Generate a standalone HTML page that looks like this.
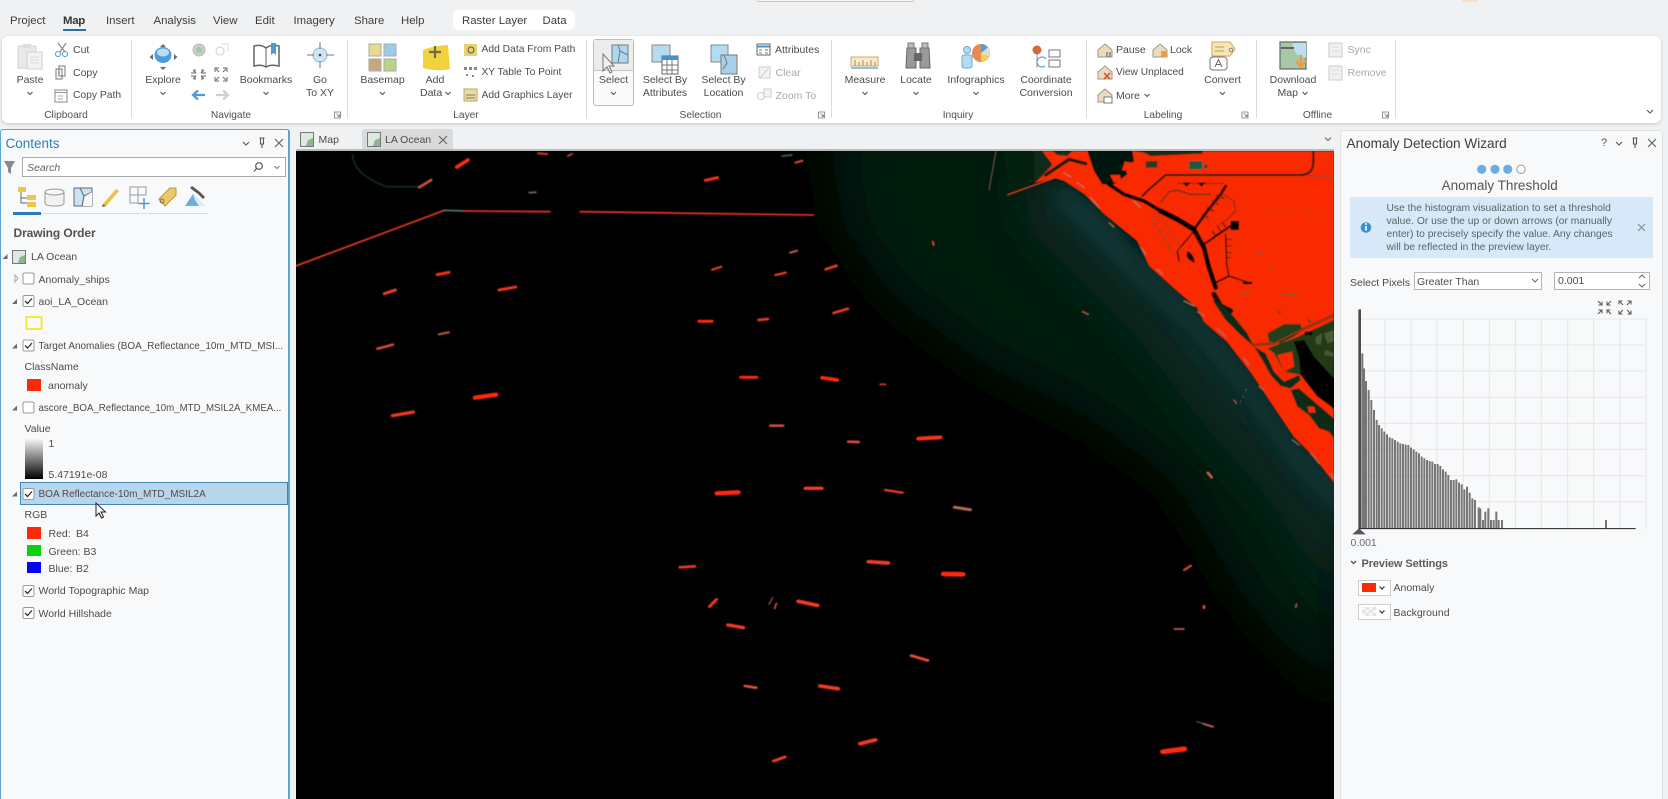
<!DOCTYPE html>
<html><head><meta charset="utf-8"><title>ArcGIS Pro</title>
<style>
html,body{margin:0;padding:0;width:1668px;height:799px;overflow:hidden;background:#eff1f3}
#r{position:absolute;left:0;top:0;width:1668px;height:799px;overflow:hidden;filter:blur(.35px);font-family:"Liberation Sans",sans-serif;color:#444;font-size:10.5px}
.b{position:absolute;box-sizing:border-box}
.t{position:absolute;white-space:nowrap;line-height:14px;height:14px}
.c{transform:translateX(-50%)}
.m{font-size:11.4px;color:#3d3d3d}
.d{color:#a9a9a9}
.g{color:#4c4c4c}
.l{font-size:10.2px;color:#505050}
svg{position:absolute}
</style></head><body><div id="r">
<!-- title and ribbon -->
<div class="b" style="left:757px;top:-2px;width:157px;height:4px;background:#f7f7f7;border:1px solid #c9c9c9;border-radius:2px"></div>
<div class="b" style="left:1462px;top:-3px;width:16px;height:5px;background:#fbdcc0;border-radius:8px"></div>
<div class="b" style="left:453px;top:10px;width:122px;height:20px;background:#fff;border-radius:5px"></div>
<div class="b" style="left:63px;top:29px;width:23px;height:2px;background:#2b6fa8"></div>
<div class="b" style="left:2px;top:36px;width:1659px;height:87px;background:#fff;border-radius:6px;box-shadow:0 1px 3px rgba(0,0,0,.18)"></div>
<div class="b" style="left:593px;top:39px;width:41px;height:67px;background:#fafafa;border:1px solid #b9bdc1;border-radius:3px"></div>
<div class="b" style="left:594px;top:40px;width:39px;height:31px;background:#ececec;border-bottom:1px solid #c4c4c4"></div>
<!-- left pane -->
<div class="b" style="left:0;top:129px;width:290px;height:680px;background:#f8f9fa;border:1px solid #5aa7d6;border-right-width:2px;border-radius:3px 3px 0 0"></div>
<div class="b" style="left:22px;top:157px;width:264px;height:20px;background:#fff;border:1px solid #a9a9a9"></div>
<div class="b" style="left:13px;top:213px;width:195px;height:1px;background:#dcdcdc"></div>
<div class="b" style="left:13px;top:212px;width:28px;height:3px;background:#2a7ac0"></div>
<div class="b" style="left:20px;top:482px;width:268px;height:23px;background:#b9d5ec;border:1px solid #3f87b5"></div>
<!-- tab strip -->
<div class="b" style="left:362px;top:129px;width:91px;height:20px;background:#d8dadc;border-radius:3px 3px 0 0"></div>
<div class="b" style="left:296px;top:149px;width:1038px;height:2px;background:#b9bbbd"></div>
<!-- map -->
<svg style="left:296px;top:151px" width="1038" height="648" viewBox="296 151 1038 648">
<defs>
<filter id="f1" filterUnits="userSpaceOnUse" x="0" y="0" width="1800" height="1000"><feGaussianBlur stdDeviation="28"/></filter>
<filter id="f2" filterUnits="userSpaceOnUse" x="0" y="0" width="1800" height="1000"><feGaussianBlur stdDeviation="22"/></filter>
<filter id="f5" filterUnits="userSpaceOnUse" x="0" y="0" width="1800" height="1000"><feGaussianBlur stdDeviation="9"/></filter>
<filter id="f3" filterUnits="userSpaceOnUse" x="0" y="0" width="1800" height="1000"><feGaussianBlur stdDeviation=".5"/></filter>
</defs>
<rect x="296" y="151" width="1038" height="648" fill="#000"/>
<path filter="url(#f1)" d="M825 120H1070L1345 480V710L1245 600L1175 480L1085 415L985 365L890 295L845 230Z" fill="#021a10"/>
<path filter="url(#f2)" d="M1020 175L1054 178L1104 214L1149 266L1197 308L1251 373L1294 437L1345 483V620L1270 500L1200 420L1135 335L1070 270L1030 230Z" fill="#072624"/>
<path filter="url(#f5)" d="M1064 181L1104 214L1149 266L1197 308L1251 373L1294 437L1340 483V520L1290 465L1240 395L1185 330L1130 280L1085 235L1050 200Z" fill="#0c3536"/>
<path d="M1003 151H1041L1054 175L1010 196Z" fill="#04200f"/>
<g filter="url(#f3)">
<path fill="#fa2c06" d="M1041 151H1334V483L1314 457L1294 437L1271 403L1251 373L1227 342L1204 322L1197 308L1177 291L1149 266L1137 241L1104 214L1084 194L1064 181L1054 178L1034 183L1042 176L1052 165Z"/>
<path d="M1007 195L1057 177" stroke="#f0391a" stroke-width="1.400" fill="none"/>
<path d="M996 151L989 190" stroke="#a46058" stroke-width=".8" fill="none"/>
<!-- upper area: crop A coords -->
<g transform="translate(1034 151) scale(.33333)" fill="none" stroke-linecap="round" stroke-linejoin="round">
<path fill="#0a2a1e" d="M0 0H25L55 40L25 72L0 90Z"/>
<path d="M35 72L105 25L155 38" stroke="#0a1a0c" stroke-width="10"/>
<path fill="#10301c" d="M55 0H115L100 15L70 12Z"/>
<path fill="#06140a" d="M160 0H295L300 30L275 55L280 70L240 100L205 100L180 60Z"/>
<path fill="#fa2c06" d="M272 32L298 35L292 58L264 58ZM228 72L258 72L262 92L240 95Z"/>
<path fill="#1a2a14" d="M300 0H505V8L350 15L330 5Z"/>
<path fill="#2a3a24" d="M335 30H370V50H335Z"/>
<path fill="#1f5a40" d="M465 30H505V55H465Z"/>
<path fill="#2a4a30" d="M510 40h10v12h-10z"/>
<path d="M225 100L270 130L330 150L380 180" stroke="#000" stroke-width="11"/>
<path d="M380 180L430 205L480 235" stroke="#000" stroke-width="16"/>
<path d="M480 235L510 290L525 350L545 410" stroke="#000" stroke-width="14"/>
<path d="M540 430L560 465L590 480" stroke="#08140a" stroke-width="16"/>
<path d="M480 235L520 180L560 130L575 105" stroke="#000" stroke-width="8"/>
<path d="M505 190L522 200M520 170L538 180M535 150L552 160M548 132L570 142" stroke="#402014" stroke-width="4"/>
<path d="M480 240L430 300L435 330" stroke="#000" stroke-width="4"/>
<path fill="#000" d="M460 300Q480 310 482 335Q465 330 458 315Z"/>
<path d="M510 280L560 245L590 225" stroke="#000" stroke-width="6"/>
<path fill="#000" d="M590 210H615V237H590Z"/>
<path d="M535 240L545 255M550 225L560 240M565 215L575 228" stroke="#402014" stroke-width="4"/>
<path d="M575 250L578 340L585 375L650 397" stroke="#100a06" stroke-width="4"/>
<path d="M545 395L585 375" stroke="#000" stroke-width="5"/>
<path d="M630 396h22" stroke="#000" stroke-width="7"/>
<path d="M578 265H592M578 285H592M578 305H592M578 320H590" stroke="#402014" stroke-width="3"/>
<path d="M395 72H800Q838 72 838 30V0" stroke="#1a1a0e" stroke-width="6"/>
<path d="M395 72L345 115L325 135" stroke="#0a1a0c" stroke-width="6"/>
<path d="M380 155L405 122L430 118L470 130L530 130" stroke="#203020" stroke-width="3.500"/>
<path d="M560 125L600 150L605 180L585 200L560 220" stroke="#3a2a18" stroke-width="2.500"/>
<path d="M430 97H570" stroke="#201008" stroke-width="2"/>
<path fill="#000" d="M445 95H470L458 107ZM490 95H515L502 107Z"/>
<path d="M350 200L380 195L440 290L415 315M350 200L420 310" stroke="#7a4030" stroke-width="2"/>
<path d="M370 215L360 225M385 235L375 245M400 255L390 265M412 275L402 285" stroke="#7a4030" stroke-width="2"/>
<path d="M825 75H900" stroke="#6a4030" stroke-width="3"/>
<path d="M710 182H770M810 185H840" stroke="#c04020" stroke-width="3"/>
<path d="M670 305H690M745 430H790M625 425H650M705 345H718" stroke="#7a5030" stroke-width="4"/>
<path d="M90 65L110 78M130 95L150 110M170 140L195 170M300 150L320 170M225 215L240 228M320 290L335 310M370 355L385 370M450 450L480 465" stroke="#b07060" stroke-width="4"/>
</g>
<!-- lower area: crop B coords -->
<g transform="translate(1184 300) scale(.33333)" fill="none" stroke-linecap="round" stroke-linejoin="round">
<path fill="#0e2a16" d="M85 0L110 10L150 50L190 100L210 140L170 105L125 60Z"/>
<path fill="#0e2a14" d="M210 140L245 160L270 215L300 245L345 225L350 240L320 265L290 258L260 225L235 180Z"/>
<path fill="#24401f" d="M250 100L300 72L350 72L355 90L330 110L290 130L255 125Z"/>
<path fill="#203a18" d="M250 145L330 115L450 60V330L420 300L380 260L350 225L300 215L270 160Z"/>
<path fill="#fa2c06" d="M280 165L325 155L330 200L300 215Z"/>
<path fill="#000" d="M330 125L360 120L390 170L450 235V325L400 290L350 225L345 170Z"/>
<path fill="#4a5a30" d="M395 110L415 100L410 135L395 130ZM420 100L450 90V125L430 130ZM425 150L450 160V170L420 165Z"/>
<path d="M210 135L270 130L340 95L450 45" stroke="#2a2a10" stroke-width="7"/>
<path d="M210 135L270 130L340 95L450 45" stroke="#d04020" stroke-width="2.500"/>
<path fill="#000" d="M362 95H385V105H362Z"/>
<path fill="#3a4020" d="M280 30l12 8-6 4zM370 55l12 8-6 8z"/>
<path fill="#0f2c14" d="M320 270L345 265L450 355V415L435 395L405 385L375 345L340 320Z"/>
<path fill="#fa2c06" d="M350 245L450 335V355L345 265ZM370 320L390 320L395 338L375 338Z"/>
<path d="M40 35L60 48M100 85L125 110M180 175L195 195M225 260L240 270M325 420L345 435M380 460L405 490M440 520L450 535" stroke="#a06860" stroke-width="4"/>
<path d="M150 300L157 310" stroke="#d85050" stroke-width="4"/>
<path d="M186 268V272M178 288V291M170 303V306" stroke="#a05060" stroke-width="3"/>
</g>
</g>
<g filter="url(#f3)">
<g transform="translate(850 125) scale(.33333)" fill="none" stroke-linecap="round">
<path d="M248 350L251 360" stroke="#f03c1e" stroke-width="6"/>
<path d="M698 560L715 568" stroke="#d04a3a" stroke-width="5"/>
<path d="M90 778L107 778" stroke="#d83a20" stroke-width="5"/>
<path d="M0 950L25 952" stroke="#f03818" stroke-width="6"/>
<path d="M205 941L270 937" stroke="#f03818" stroke-width="8"/>
<path d="M105 1095L155 1103" stroke="#e63a1e" stroke-width="5"/>
<path d="M315 1147L360 1155" stroke="#c84c3c" stroke-width="6"/>
<path d="M1075 1045L1085 1057" stroke="#c8504a" stroke-width="6"/>
</g>
<g transform="translate(290 125) scale(.35714 .33333)" fill="none" stroke-linecap="round">
<path d="M175 90Q180 150 270 185H360" stroke="#0d2e2c" stroke-width="5"/>
<path d="M16 423L432 256" stroke="#ea3a26" stroke-width="5"/>
<path d="M432 256L490 258" stroke="#5a7a78" stroke-width="5"/>
<path d="M490 258L728 260M812 260L1465 270" stroke="#f0321c" stroke-width="5"/>
<path d="M467 126L498 105" stroke="#f43014" stroke-width="11"/>
<path d="M362 187L395 165" stroke="#d0503e" stroke-width="8"/>
<path d="M695 85L720 87" stroke="#d04030" stroke-width="6"/>
<path d="M778 93L790 86" stroke="#d04a3a" stroke-width="5"/>
<path d="M670 203L688 202" stroke="#7a5a58" stroke-width="6"/>
<path d="M1378 93L1405 90" stroke="#406a68" stroke-width="5"/>
<path d="M1415 113L1435 107" stroke="#d84a3a" stroke-width="6"/>
<path d="M1163 166L1197 158" stroke="#f43014" stroke-width="9"/>
<path d="M412 449L445 442" stroke="#f43014" stroke-width="9"/>
<path d="M264 506L295 495" stroke="#e84024" stroke-width="9"/>
<path d="M585 495L632 486" stroke="#f03418" stroke-width="9"/>
<path d="M417 628L445 622" stroke="#c05a50" stroke-width="6"/>
<path d="M245 671L288 659" stroke="#d8483a" stroke-width="8"/>
<path d="M518 818L577 809" stroke="#ff2a0a" stroke-width="13"/>
<path d="M287 872L345 861" stroke="#f03a20" stroke-width="10"/>
<path d="M1182 434L1208 425" stroke="#f03a20" stroke-width="6"/>
<path d="M1400 383L1420 377" stroke="#b85a50" stroke-width="6"/>
<path d="M1359 450L1388 443" stroke="#f03a20" stroke-width="7"/>
<path d="M1500 433L1530 422" stroke="#f03a20" stroke-width="8"/>
<path d="M1522 564L1562 551" stroke="#f03a20" stroke-width="8"/>
<path d="M1145 589L1182 589" stroke="#ff2a0a" stroke-width="9"/>
<path d="M1312 585L1338 582" stroke="#f03a20" stroke-width="8"/>
<path d="M1262 757L1307 757" stroke="#ff2a0a" stroke-width="9"/>
<path d="M1490 758L1532 765" stroke="#ff2a0a" stroke-width="11"/>
</g>
<g transform="translate(600 420) scale(.47192 .33333)" fill="none" stroke-linecap="round">
<path d="M362 17L387 17" stroke="#d84a3a" stroke-width="8"/>
<path d="M527 65L547 66" stroke="#d84a3a" stroke-width="8"/>
<path d="M676 56L720 52" stroke="#f43014" stroke-width="12"/>
<path d="M249 220L292 217" stroke="#ff2a0a" stroke-width="13"/>
<path d="M436 205L469 205" stroke="#f03a20" stroke-width="10"/>
<path d="M605 210L640 218" stroke="#f03a20" stroke-width="7"/>
<path d="M752 262L784 269" stroke="#b86a5c" stroke-width="9"/>
<path d="M1288 158L1296 172" stroke="#b85a50" stroke-width="7"/>
<path d="M170 442L200 439" stroke="#f03a20" stroke-width="8"/>
<path d="M570 425L610 429" stroke="#f03a20" stroke-width="11"/>
<path d="M729 462L768 463" stroke="#ff2a0a" stroke-width="14"/>
<path d="M232 560L247 538" stroke="#f03a20" stroke-width="7"/>
<path d="M358 553L366 532" stroke="#a04a40" stroke-width="3"/>
<path d="M370 566L374 550" stroke="#c04a40" stroke-width="4"/>
<path d="M421 544L460 556" stroke="#f03a20" stroke-width="11"/>
<path d="M272 615L303 623" stroke="#f03a20" stroke-width="10"/>
<path d="M660 707L694 721" stroke="#e84a30" stroke-width="8"/>
<path d="M308 798L330 803" stroke="#e05040" stroke-width="8"/>
<path d="M467 798L504 806" stroke="#f03a20" stroke-width="11"/>
<path d="M1238 450L1252 437" stroke="#d04a40" stroke-width="6"/>
<path d="M1280 558V564" stroke="#e04a30" stroke-width="6"/>
<path d="M1476 552L1474 562" stroke="#b05048" stroke-width="4"/>
<path d="M1218 627L1236 627" stroke="#a85048" stroke-width="6"/>
<path d="M1265 905L1280 912" stroke="#2a5a60" stroke-width="4"/>
<path d="M1280 912L1298 920" stroke="#b85a50" stroke-width="6"/>
<path d="M1194 995L1237 987" stroke="#ff2a0a" stroke-width="15"/>
<path d="M552 971L583 960" stroke="#f03a20" stroke-width="11"/>
<path d="M368 1023L392 1011" stroke="#f03a20" stroke-width="8"/>
</g>
</g>
</svg>
<!-- right pane -->
<div class="b" style="left:1340px;top:130px;width:323px;height:680px;background:#f8f9fa;border:1px solid #dfe1e3;border-radius:3px 3px 0 0"></div>
<div class="b" style="left:1350px;top:197px;width:303px;height:61px;background:#d7e9f8"></div>
<div class="b" style="left:1414px;top:272px;width:128px;height:18px;background:#fff;border:1px solid #b5b5b5"></div>
<div class="b" style="left:1554px;top:272px;width:96px;height:18px;background:#fff;border:1px solid #b5b5b5"></div>
<!-- histogram -->
<svg style="left:1335px;top:300px" width="333" height="330" viewBox="0 0 999 990">
<path fill="none" stroke="#e6e7e8" stroke-width="3.300" d="M75 57H935M75 135H935M75 213H935M75 292H935M75 370H935M75 448H935M75 527H935M75 605H935M150 57V685M228 57V685M306 57V685M385 57V685M463 57V685M541 57V685M619 57V685M698 57V685M776 57V685M855 57V685M933 57V685"/>
<path fill="none" stroke="#767676" stroke-width="6" d="M82 160V685M87 205V685M93 243V685M101 270V685M109 300V685M117 330V685M125 360V685M132 375V685M140 385V685M148 395V685M156 403V685M164 412V685M172 415V685M180 420V685M188 425V685M196 430V685M204 432V685M212 434V685M220 435V685M228 443V685M236 448V685M244 455V685M252 460V685M260 470V685M268 475V685M276 480V685M284 483V685M292 485V685M300 492V685M308 492V685M316 498V685M324 508V685M332 515V685M340 525V685M348 540V685M356 540V685M364 538V685M372 548V685M380 553V685M388 568V685M396 560V685M404 578V685M412 595V685M420 600V685M431 622V685M436 625V685M444 660V685M451 635V685M460 625V685M468 660V685M476 660V685M484 635V685M491 660V685M501 660V685M813 660V685"/>
<path d="M74 28V685" stroke="#4d4d4d" stroke-width="8" fill="none"/>
<path d="M70 686H902" stroke="#1e1e1e" stroke-width="3" fill="none"/>
<path d="M52 703L72 685L92 703Z" fill="#555"/>
</svg>
<!-- icons in page coordinates -->
<svg style="left:0;top:0" width="1668" height="799" viewBox="0 0 1668 799">
<g fill="none" stroke="#555" stroke-width="1.100">
<path d="M27.500 92l2.500 2.500 2.500-2.500M160.500 92l2.500 2.500 2.500-2.500M263.500 92l2.500 2.500 2.500-2.500M380 92l2.500 2.500 2.500-2.500M445.500 92l2.500 2.500 2.500-2.500M611 92l2.500 2.500 2.500-2.500M862.500 92l2.500 2.500 2.500-2.500M913.500 92l2.500 2.500 2.500-2.500M973.500 92l2.500 2.500 2.500-2.500M1220 92l2.500 2.500 2.500-2.500M1302.500 92l2.500 2.500 2.500-2.500M1144.500 94l2.500 2.500 2.500-2.500M1647 110l3 3 3-3"/>
</g>
<path stroke="#d8dadc" stroke-width="1" d="M131.500 40V118M347.500 40V118M586.500 40V118M831.500 40V118M1086.500 40V118M1256.500 40V118M1395.500 40V118" fill="none"/>
<g fill="none" stroke="#777" stroke-width=".8"><path d="M334.500 112h6v6h-6zM336.500 113.500l3 3m0-2v2h-2M818.500 112h6v6h-6zM820.500 113.500l3 3m0-2v2h-2M1242 112h6v6h-6zM1244 113.500l3 3m0-2v2h-2M1382.500 112h6v6h-6zM1384.500 113.500l3 3m0-2v2h-2"/></g>
<!-- paste -->
<path d="M18 46h18v22H18z" fill="#e9e9e9" stroke="#d2d2d2"/><path d="M23 44h8v4h-8z" fill="#ddd"/><path d="M27 52h15v17H27z" fill="#f3f3f3" stroke="#d0d0d0"/><path d="M30 57h9M30 60h9M30 63h9" stroke="#d8d8d8"/>
<!-- cut copy -->
<g fill="none"><path d="M58 43l7 9M66 43l-6 9" stroke="#888" stroke-width="1.200"/><circle cx="58" cy="54" r="2.500" stroke="#4a93cc"/><circle cx="65" cy="54" r="2.500" stroke="#4a93cc"/>
<path d="M59 66h6v10h-6zM56 69h6v10h-6z" stroke="#777" fill="#fff"/><path d="M58 72h2M58 74h2M58 76h2" stroke="#999"/>
<path d="M55 90h12v12H55z" stroke="#888"/><path d="M55 92.500h12" stroke="#999"/><path d="M58 96h5M58 99h5" stroke="#aaa"/></g>
<!-- explore -->
<ellipse cx="163" cy="55" rx="8.500" ry="8" fill="#4b9ede"/><ellipse cx="163" cy="52.500" rx="6" ry="4" fill="#bcdcf4"/>
<path d="M163 44l-3 3h6zM163 70l-3-3h6zM149.500 57l3.500-3v6zM177.500 57l-3.500-3v6z" fill="#6b6b6b"/>
<!-- nav small -->
<circle cx="199" cy="50" r="6" fill="#c8d0c8" stroke="#b5bcb5"/><circle cx="199" cy="50" r="3" fill="#a5c4a5"/>
<circle cx="220" cy="51" r="4" fill="none" stroke="#ccc"/><path d="M221 44h7v7" fill="none" stroke="#ddd"/>
<path d="M193 70l3 3m-1-4v4h-4M204 70l-3 3m1-4v4h4M193 79l3-3m-1 4v-4h-4M204 79l-3-3m1 4v-4h4M216 69l3 3m-4 0v-4h4M226 69l-3 3m4 0v-4h-4M216 80l3-3m-4-0v4h4M226 80l-3-3m4 0v4h-4" fill="none" stroke="#666" stroke-width="1"/>
<path d="M193 95h12M198 90.500l-5 4.500 5 4.500" fill="none" stroke="#4c9bd8" stroke-width="2.200"/>
<path d="M216 95h12M223 90.500l5 4.500-5 4.500" fill="none" stroke="#cfcfcf" stroke-width="2.200"/>
<!-- bookmarks -->
<path d="M254 46q7-2 12 2q5-4 13-2v20q-8-2-13 1q-5-3-12-1z" fill="#fff" stroke="#5b6770" stroke-width="1.500"/><path d="M266 48v19" stroke="#5b6770"/><path d="M271 43h5v12l-2.500-2-2.500 2z" fill="#4e9bd4"/>
<!-- go to xy -->
<circle cx="320" cy="55" r="7" fill="#cfe6f7" stroke="#87b8dc"/><circle cx="320" cy="55" r="1.300" fill="#444"/><path d="M320 42v7M320 61v7M307 55h7M326 55h8" stroke="#777"/>
<!-- basemap -->
<rect x="369" y="44" width="12" height="12" fill="#ecd98c" stroke="#aaa"/><rect x="384" y="44" width="12" height="12" fill="#9bcbe8" stroke="#aaa"/><rect x="369" y="59" width="12" height="12" fill="#c9a77e" stroke="#aaa"/><rect x="384" y="59" width="12" height="12" fill="#b7d48b" stroke="#aaa"/>
<!-- add data -->
<path d="M423 50q13-5 25-5l2 24q-13 3-27-1z" fill="#f2d33e"/><path d="M435 46v12M429 52h12" stroke="#6b6b50" stroke-width="2.200"/>
<rect x="464" y="44" width="13" height="12" fill="#ebd06c"/><circle cx="471" cy="50" r="3" fill="none" stroke="#555"/>
<path d="M464 67h3v3h-3zM469 67h3v3h-3zM474 67h3v3h-3zM466 74h2v2h-2zM472 75h2v2h-2z" fill="#888"/>
<rect x="464" y="89" width="13" height="12" fill="#eadba0" stroke="#b5a86a"/><path d="M466 95h9M466 98h9" stroke="#777"/>
<!-- select -->
<path d="M612 45h16v18h-16z" fill="#a8d8f3" stroke="#777"/><path d="M618 45l2 6 8 4M620 51l-2 12" fill="none" stroke="#777"/><path d="M603 54v17l4-4 3 6 2-1-3-6h5z" fill="#f0f0f0" stroke="#777"/>
<!-- select by attributes -->
<path d="M652 45h18v17h-18z" fill="#b3dcf3" stroke="#888"/><rect x="662" y="56" width="16" height="18" fill="#fff" stroke="#666"/><rect x="662" y="56" width="16" height="4" fill="#4a90c8"/><path d="M667 60v14M672 60v14M662 65h16M662 70h16" stroke="#777"/>
<!-- select by location -->
<path d="M711 45h17v17h-17z" fill="#b3dcf3" stroke="#888"/><path d="M721 55h16v19h-16z" fill="#a8d0e8" stroke="#777"/><path d="M724 55l3 8-4 6" stroke="#777" fill="none"/>
<!-- attributes, clear, zoom to -->
<rect x="757" y="44" width="13" height="11" fill="#fff" stroke="#666"/><path d="M757 46.500h13" stroke="#4a90c8" stroke-width="2"/><path d="M759 50h3M765 50h3M759 53h3M765 53h3" stroke="#777"/>
<rect x="759" y="67" width="11" height="11" fill="#f3f3f3" stroke="#ccc"/><path d="M760 78l5-6 3-3" stroke="#ccc" fill="none"/>
<circle cx="761" cy="96" r="3.500" fill="none" stroke="#ccc"/><rect x="764" y="89" width="7" height="8" fill="#f5f5f5" stroke="#ccc"/>
<!-- measure -->
<rect x="851" y="57" width="27" height="9" fill="#f8e9c7" stroke="#c8a978"/><path d="M855 60v6M859 62v4M863 60v6M867 62v4M871 60v6M875 62v4" stroke="#a98a5c"/><path d="M851 68h27" stroke="#4e9bd4" stroke-width="1.200"/>
<!-- locate -->
<path d="M907 48h9v20h-10zM920 48h9l1 20h-10z" fill="#9a9a9a" stroke="#666"/><path d="M908 43h6v5h-6zM922 43h6v5h-6z" fill="#bbb" stroke="#777"/><rect x="914" y="53" width="8" height="8" fill="#666"/>
<!-- infographics -->
<rect x="962" y="55" width="10" height="13" rx="2" fill="#b4dbf2" stroke="#6ba8d0"/><circle cx="967" cy="50" r="3.500" fill="#b4dbf2" stroke="#6ba8d0"/>
<circle cx="981" cy="53" r="9" fill="#e78b50"/><path d="M981 53V44a9 9 0 0 1 7 3.500z" fill="#4ca1d8"/><path d="M981 53l7-5.500a9 9 0 0 1 1 9z" fill="#ddd"/><path d="M981 53l8 3.500a9 9 0 0 1-8 5.500z" fill="#f3d25a"/>
<!-- coordinate -->
<circle cx="1037" cy="50" r="4.500" fill="#d9663c"/><path d="M1037 54v14" stroke="#999"/><rect x="1049" y="50" width="11" height="7" fill="#fff" stroke="#777"/><rect x="1049" y="60" width="11" height="7" fill="#fff" stroke="#777"/><path d="M1046 59a5 5 0 1 0-1 7" fill="none" stroke="#3f90cc"/>
<!-- labeling -->
<g fill="#ecdcbc" stroke="#9a9a8a"><path d="M1098 50l7-6 7 6v7h-14zM1153 50l7-6 7 6v7h-14zM1098 72l7-6 7 6v7h-14zM1098 95l7-6 7 6v7h-14z"/></g>
<path d="M1107 52v5M1110 52v5" stroke="#555"/><rect x="1161" y="51" width="6" height="6" fill="#e3a24a"/><path d="M1104 73l6 6m0-6l-6 6" stroke="#d84a2a" stroke-width="1.500"/><rect x="1104" y="97" width="8" height="6" fill="#fff" stroke="#777"/>
<!-- convert -->
<path d="M1212 42h18l5 7-5 7h-18z" fill="#f5e7b5" stroke="#c9a75a"/><path d="M1215 47h9M1215 51h9" stroke="#b89a50"/><circle cx="1231" cy="50" r="1.800" fill="none" stroke="#888"/><rect x="1210" y="57" width="17" height="13" rx="3" fill="#fff" stroke="#777"/><path d="M1215 67l3.500-7.500 3.500 7.500M1216.200 64.500h4.600" fill="none" stroke="#666"/>
<!-- download -->
<rect x="1280" y="42" width="26" height="27" fill="#a8c7a6" stroke="#5c6a6a" stroke-width="1.200"/><path d="M1292 43h14v15l-10-4z" fill="#bcdff0"/><path d="M1281 48h13" stroke="#666" stroke-width="2"/><path d="M1301 55v10M1296 61l5 6 5-6" fill="none" stroke="#ee9c33" stroke-width="2.200"/>
<g fill="#f0f0f0" stroke="#ccc"><rect x="1329" y="43" width="13" height="14"/><rect x="1329" y="66" width="13" height="14"/></g><path d="M1332 47h7M1332 51h7M1332 70h7M1332 74h7" stroke="#ddd"/>
<!-- contents header -->
<path d="M243 142l3 3 3-3M1616 142l3 3 3-3" fill="none" stroke="#555" stroke-width="1.100"/>
<path d="M259.500 138h5M260.500 138v6h3v-6M262 144v4M1632.500 138h5M1633.500 138v6h3v-6M1635 144v4" fill="none" stroke="#555" stroke-width="1.100"/>
<path d="M275 139l8 8m0-8l-8 8M1648 139l8 8m0-8l-8 8M439 136l8 8m0-8l-8 8" fill="none" stroke="#666" stroke-width="1.200"/>
<path d="M4 161h11l-4 7v6l-3-2v-4z" fill="#888"/>
<circle cx="259" cy="166" r="3.300" fill="none" stroke="#555" stroke-width="1.200"/><path d="M256.500 168.500l-2.500 3" stroke="#555" stroke-width="1.200"/>
<path d="M274.500 166l2.500 2.500 2.500-2.500" fill="none" stroke="#777"/>
<!-- contents tabs -->
<path d="M21 192v11h6M21 198h6" fill="none" stroke="#666"/><rect x="18" y="187" width="8" height="5" fill="#ecc54a"/><rect x="27" y="195" width="9" height="5" fill="#ecc54a"/><rect x="27" y="202" width="9" height="5" fill="#ecc54a"/>
<path d="M45 192v11q0 3 9.500 3t9.500-3v-11" fill="#f2f2f2" stroke="#999"/><ellipse cx="54.500" cy="192" rx="9.500" ry="3" fill="#f7f7f7" stroke="#999"/>
<path d="M74 188h18v18H74z" fill="#c9e3f3" stroke="#667"/><path d="M80 188l4 8-2 10M84 196l8-4" fill="none" stroke="#667"/><path d="M85 196l7-4v14h-9z" fill="#f8f8f8"/>
<path d="M103 204l13-15 3 2-13 15-4 1z" fill="#eec04a"/><path d="M103 204l3 2-4 1z" fill="#666"/>
<path d="M130 187h8v8h-8zM138 187h8v8h-8zM130 195h8v8h-8z" fill="none" stroke="#999"/><path d="M144 198v11M138.500 203.500h11" stroke="#4e9bd4" stroke-width="1.500"/>
<path d="M159 199l11-11h6v7l-11 11z" fill="#edc96a" stroke="#b8953e"/><circle cx="162" cy="201" r="2" fill="none" stroke="#866"/>
<path d="M185 206l8-12 12 12z" fill="#6daee0"/><path d="M193 194l12 12h-6l-4-6z" fill="#dcecf8"/><path d="M190 188l8 6 2-2-8-6zM198 194l5 5 2-2-5-5z" fill="#555"/>
<!-- tree triangles -->
<path d="M2.500 259l5-5v5zM12 304l5-5v5zM12 348.500l5-5v5zM12 410.500l5-5v5zM12 496.500l5-5v5z" fill="#6a6a6a"/>
<path d="M15 275l3 3.500-3 3.500z" fill="none" stroke="#aaa"/>
<!-- map tree icons -->
<g><rect x="12.500" y="250.500" width="13" height="13" fill="#dce9e2" stroke="#777"/><path d="M18 263l2-6 5-2v8z" fill="#8fb48f"/>
<rect x="300.500" y="132.500" width="13" height="14" fill="#dce9e2" stroke="#777"/><path d="M306 146l2-6 5-2v8z" fill="#8fb48f"/>
<rect x="367.500" y="132.500" width="13" height="14" fill="#dce9e2" stroke="#777"/><path d="M373 146l2-6 5-2v8z" fill="#8fb48f"/></g>
<!-- checkboxes -->
<g fill="#fff" stroke="#9a9a9a"><rect x="23" y="273" width="11" height="11" rx="1.500"/><rect x="23" y="295.500" width="11" height="11" rx="1.500"/><rect x="23" y="340" width="11" height="11" rx="1.500"/><rect x="23" y="402" width="11" height="11" rx="1.500"/><rect x="23" y="488.500" width="11" height="11" rx="1.500"/><rect x="23" y="585.500" width="11" height="11" rx="1.500"/><rect x="23" y="607.500" width="11" height="11" rx="1.500"/></g>
<path d="M25 301l2.500 2.500 4.500-5M25 345.500l2.500 2.500 4.500-5M25 494l2.500 2.500 4.500-5M25 591l2.500 2.500 4.500-5M25 613l2.500 2.500 4.500-5" fill="none" stroke="#333" stroke-width="1.300"/>
<!-- legend -->
<rect x="26.500" y="317" width="15" height="12" fill="#fafafa" stroke="#f4ea3c" stroke-width="2"/>
<rect x="27" y="379" width="14" height="12" fill="#fa2c06"/>
<defs><linearGradient id="gr" x1="0" y1="0" x2="0" y2="1"><stop offset="0" stop-color="#f5f5f5"/><stop offset="1" stop-color="#000"/></linearGradient></defs>
<rect x="25" y="439" width="18" height="40" fill="url(#gr)"/>
<rect x="27" y="527" width="14" height="12" fill="#fa2c06"/><rect x="27" y="545" width="14" height="11" fill="#0ad30a"/><rect x="27" y="562" width="14" height="11" fill="#0505f0"/>
<path d="M96 503v13l3-3 2.500 5 2-1-2.500-5h4.500z" fill="#fff" stroke="#222"/>
<!-- tab chevron -->
<path d="M1325 137.500l3 3 3-3" fill="none" stroke="#666" stroke-width="1.100"/>
<!-- wizard -->
<circle cx="1481.700" cy="169.300" r="4.600" fill="#6badde"/><circle cx="1495" cy="169.300" r="4.600" fill="#6badde"/><circle cx="1507.700" cy="169.300" r="4.600" fill="#6badde"/><circle cx="1521" cy="169.300" r="4.200" fill="#fff" stroke="#999"/>
<circle cx="1366" cy="227.500" r="5.300" fill="#3e90d2"/><path d="M1366 226v4.500" stroke="#fff" stroke-width="1.700"/><circle cx="1366" cy="224" r="1" fill="#fff"/>
<path d="M1638 224l7 7m0-7l-7 7" stroke="#8a8f94" stroke-width="1.200" fill="none"/>
<path d="M1532 279l3 3 3-3M1639 278l3-3 3 3M1639 284l3 3 3-3" fill="none" stroke="#666"/>
<path d="M1598 301l4 4m-3.500 0h3.500v-3.500M1611 301l-4 4m3.500 0h-3.500v-3.500M1598 314l4-4m-3.500 0h3.500v3.500M1611 314l-4-4m3.500 0h-3.500v3.500M1623 305l-4-4m3.500 0h-3.500v3.500M1627 305l4-4m-3.500 0h3.500v3.500M1623 310l-4 4m3.500 0h-3.500v-3.500M1627 310l4 4m-3.500 0h3.500v-3.500" fill="none" stroke="#555"/>
<path d="M1351 561l2.500 2.500 2.500-2.500" fill="none" stroke="#555" stroke-width="1.300"/>
<rect x="1358.500" y="580.500" width="32" height="15" fill="#fff" stroke="#ccc"/><rect x="1362" y="583" width="14" height="9" fill="#fa2c06"/><path d="M1379.500 586.500l2.500 2.500 2.500-2.500" fill="none" stroke="#333" stroke-width="1.200"/>
<rect x="1358.500" y="604.500" width="32" height="15" fill="#fff" stroke="#ccc"/><rect x="1362" y="607" width="14" height="9" fill="#e4e4e4"/><path d="M1362 607h3.500v3h-3.500zM1369 607h3.500v3H1369zM1365.500 610h3.500v3h-3.500zM1372.500 610h3.500v3h-3.500zM1362 613h3.500v3h-3.500zM1369 613h3.500v3H1369z" fill="#f8f8f8"/><path d="M1379.500 610.500l2.500 2.500 2.500-2.500" fill="none" stroke="#333" stroke-width="1.200"/>
</svg>
<!-- ribbon tabs -->
<div class="t m" style="left:10px;top:14px">Project</div>
<div class="t m" style="left:63px;top:14px;font-weight:bold;color:#333;letter-spacing:-.3px">Map</div>
<div class="t m" style="left:106px;top:14px">Insert</div>
<div class="t m" style="left:153.500px;top:14px">Analysis</div>
<div class="t m" style="left:213px;top:14px">View</div>
<div class="t m" style="left:255px;top:14px">Edit</div>
<div class="t m" style="left:293.500px;top:14px">Imagery</div>
<div class="t m" style="left:354px;top:14px">Share</div>
<div class="t m" style="left:401px;top:14px">Help</div>
<div class="t m" style="left:462px;top:14px">Raster Layer</div>
<div class="t m" style="left:542.500px;top:14px">Data</div>
<!-- ribbon labels -->
<div class="t g c" style="left:30px;top:73px">Paste</div>
<div class="t g" style="left:73px;top:43px">Cut</div>
<div class="t g" style="left:73px;top:66px">Copy</div>
<div class="t g" style="left:73px;top:89px;font-size:10.300px">Copy Path</div>
<div class="t l c" style="left:66px;top:109px">Clipboard</div>
<div class="t g c" style="left:163px;top:73px">Explore</div>
<div class="t g c" style="left:266px;top:73px">Bookmarks</div>
<div class="t g c" style="left:320px;top:73px">Go</div>
<div class="t g c" style="left:320px;top:86px">To XY</div>
<div class="t l c" style="left:231px;top:109px">Navigate</div>
<div class="t g c" style="left:382.500px;top:73px">Basemap</div>
<div class="t g c" style="left:435px;top:73px">Add</div>
<div class="t g" style="left:420px;top:86px">Data</div>
<div class="t g" style="left:481.500px;top:43px;font-size:10.300px">Add Data From Path</div>
<div class="t g" style="left:481.500px;top:66px;font-size:10.200px">XY Table To Point</div>
<div class="t g" style="left:481.500px;top:89px;font-size:10.300px">Add Graphics Layer</div>
<div class="t l c" style="left:466px;top:109px">Layer</div>
<div class="t g c" style="left:613.500px;top:73px">Select</div>
<div class="t g c" style="left:665px;top:73px">Select By</div>
<div class="t g c" style="left:665px;top:86px">Attributes</div>
<div class="t g c" style="left:723.500px;top:73px">Select By</div>
<div class="t g c" style="left:723.500px;top:86px">Location</div>
<div class="t g" style="left:775px;top:43px">Attributes</div>
<div class="t d" style="left:775.500px;top:66px">Clear</div>
<div class="t d" style="left:775.500px;top:89px">Zoom To</div>
<div class="t l c" style="left:700.500px;top:109px">Selection</div>
<div class="t g c" style="left:865px;top:73px">Measure</div>
<div class="t g c" style="left:916px;top:73px">Locate</div>
<div class="t g c" style="left:976px;top:73px">Infographics</div>
<div class="t g c" style="left:1046px;top:73px">Coordinate</div>
<div class="t g c" style="left:1046px;top:86px">Conversion</div>
<div class="t l c" style="left:958px;top:109px">Inquiry</div>
<div class="t g" style="left:1116px;top:43px">Pause</div>
<div class="t g" style="left:1170px;top:43px">Lock</div>
<div class="t g" style="left:1116px;top:66px;font-size:10.200px">View Unplaced</div>
<div class="t g" style="left:1116px;top:89px">More</div>
<div class="t g c" style="left:1222.500px;top:73px">Convert</div>
<div class="t l c" style="left:1163px;top:109px">Labeling</div>
<div class="t g c" style="left:1293px;top:73px">Download</div>
<div class="t g" style="left:1277.500px;top:86px">Map</div>
<div class="t d" style="left:1347.500px;top:43px">Sync</div>
<div class="t d" style="left:1347.500px;top:66px">Remove</div>
<div class="t l c" style="left:1317.500px;top:109px">Offline</div>
<!-- contents -->
<div class="t" style="left:5.500px;top:137px;font-size:13.500px;color:#2b80b9">Contents</div>
<div class="t" style="left:27px;top:161px;font-style:italic;color:#666">Search</div>
<div class="t" style="left:13.500px;top:226px;font-size:12px;font-weight:bold;color:#525252;letter-spacing:-.1px">Drawing Order</div>
<div class="t g" style="left:31px;top:250px">LA Ocean</div>
<div class="t g" style="left:38.500px;top:273px">Anomaly_ships</div>
<div class="t g" style="left:38.500px;top:295px">aoi_LA_Ocean</div>
<div class="t g" style="left:38.500px;top:340px;font-size:9.950px">Target Anomalies (BOA_Reflectance_10m_MTD_MSI...</div>
<div class="t g" style="left:24.500px;top:360px">ClassName</div>
<div class="t g" style="left:48px;top:379px">anomaly</div>
<div class="t g" style="left:38.500px;top:402px;font-size:9.700px">ascore_BOA_Reflectance_10m_MTD_MSIL2A_KMEA...</div>
<div class="t g" style="left:24.500px;top:422px">Value</div>
<div class="t g" style="left:48.500px;top:437px">1</div>
<div class="t g" style="left:48.500px;top:468px">5.47191e-08</div>
<div class="t g" style="left:38.500px;top:488px;font-size:10px">BOA Reflectance-10m_MTD_MSIL2A</div>
<div class="t g" style="left:24.500px;top:508px">RGB</div>
<div class="t g" style="left:48.500px;top:527px">Red:</div>
<div class="t g" style="left:76px;top:527px">B4</div>
<div class="t g" style="left:48.500px;top:545px">Green: B3</div>
<div class="t g" style="left:48.500px;top:562px">Blue:</div>
<div class="t g" style="left:76px;top:562px">B2</div>
<div class="t g" style="left:38.500px;top:584px">World Topographic Map</div>
<div class="t g" style="left:38.500px;top:607px">World Hillshade</div>
<!-- tabs -->
<div class="t g" style="left:318.500px;top:133px">Map</div>
<div class="t g" style="left:385px;top:133px">LA Ocean</div>
<!-- wizard -->
<div class="t" style="left:1346.500px;top:137px;font-size:13.600px;color:#3d3d3d">Anomaly Detection Wizard</div>
<div class="t" style="left:1601px;top:136px;font-size:11px;color:#555">?</div>
<div class="t c" style="left:1499.700px;top:179px;font-size:13.500px;color:#555">Anomaly Threshold</div>
<div class="t" style="left:1386.500px;top:202px;line-height:13px;font-size:10.300px;color:#566">Use the histogram visualization to set a threshold</div>
<div class="t" style="left:1386.500px;top:215px;line-height:13px;font-size:10.300px;color:#566">value. Or use the up or down arrows (or manually</div>
<div class="t" style="left:1386.500px;top:228px;line-height:13px;font-size:10.300px;color:#566">enter) to precisely specify the value. Any changes</div>
<div class="t" style="left:1386.500px;top:241px;line-height:13px;font-size:10.300px;color:#566">will be reflected in the preview layer.</div>
<div class="t g" style="left:1350px;top:276px">Select Pixels</div>
<div class="t g" style="left:1417px;top:275px">Greater Than</div>
<div class="t g" style="left:1558px;top:274px">0.001</div>
<div class="t g" style="left:1350.500px;top:536px;color:#667">0.001</div>
<div class="t" style="left:1361.500px;top:557px;font-size:11px;font-weight:bold;color:#5c5c5c;letter-spacing:-.1px">Preview Settings</div>
<div class="t g" style="left:1393.500px;top:581px">Anomaly</div>
<div class="t g" style="left:1393.500px;top:606px">Background</div>
</div></body></html>
